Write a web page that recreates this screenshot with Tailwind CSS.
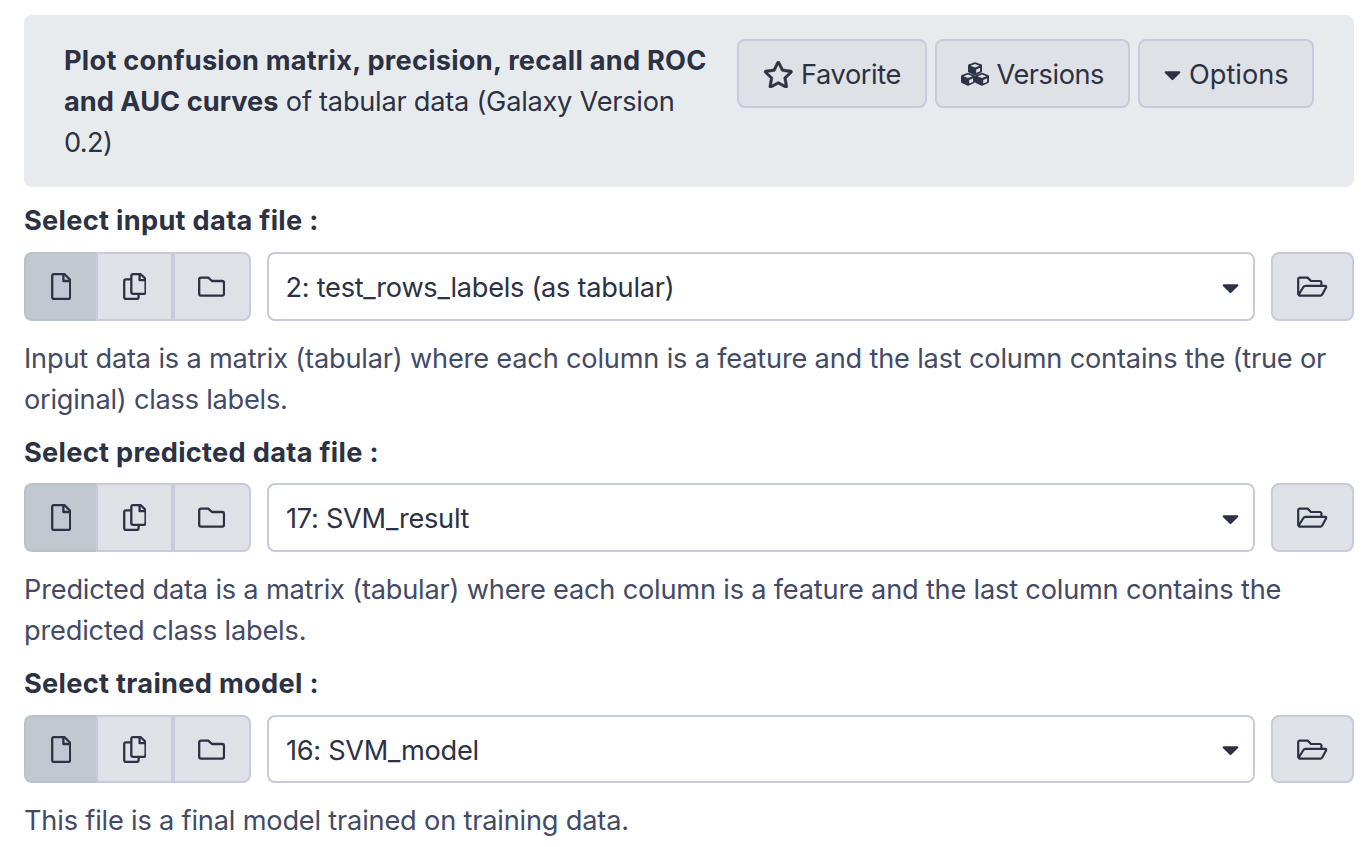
<!DOCTYPE html>
<html lang="en">
<head>
<meta charset="utf-8">
<title>Plot confusion matrix, precision, recall and ROC and AUC curves</title>
<script src="https://cdn.jsdelivr.net/npm/@tailwindcss/browser@4"></script>
</head>
<body class="h-[847px] overflow-hidden bg-white pl-6 pr-[18px] pt-[15px] font-['Inter',sans-serif] text-[27.2px] leading-[41px] text-[#2c3143]">
<svg class="hidden">
  <symbol id="star" viewBox="0 0 576 512" overflow="visible"><path stroke="currentColor" stroke-width="9" d="M528.1 171.5L382 150.2 316.7 17.8c-11.7-23.6-45.6-23.9-57.4 0L194 150.2 47.9 171.5c-26.2 3.8-36.7 36.1-17.7 54.6l105.7 103-25 145.5c-4.5 26.3 23.2 46 46.4 33.7L288 439.6l130.7 68.7c23.2 12.2 50.9-7.4 46.4-33.7l-25-145.5 105.7-103c19-18.5 8.5-50.8-17.7-54.6zM388.6 312.3l23.7 138.4L288 385.4l-124.3 65.3 23.7-138.4-100.6-98 139-20.2 62.2-126 62.2 126 139 20.2-100.6 98z"/></symbol>
  <symbol id="cube" viewBox="0 0 14 13" overflow="visible"><path fill-rule="evenodd" d="M6.2.2Q7-.1 7.8.2L13 2.1Q14 2.5 14 3.5V9Q14 9.9 13.2 10.3L7.8 12.8Q7 13.1 6.2 12.8L.8 10.3Q0 9.9 0 9V3.5Q0 2.5 1 2.1ZM7 1.8L2.5 3.5 7 5.3 11.5 3.5ZM8.2 7.2V10.8L12.1 9.1V5.5Z"/></symbol>
  <symbol id="cubes" viewBox="0 0 28 27.2"><use href="#cube" x="7" y="1.2" width="14" height="13"/><use href="#cube" x="0" y="11.8" width="14" height="13"/><use href="#cube" x="14" y="11.8" width="14" height="13"/></symbol>
  <symbol id="caret" viewBox="0 0 320 512"><path d="M31.3 192h257.3c17.8 0 26.7 21.5 14.1 34.1L174.1 354.8c-7.8 7.8-20.5 7.8-28.3 0L17.2 226.1C4.6 213.5 13.5 192 31.3 192z"/></symbol>
  <symbol id="file" viewBox="0 0 20.4 27.2"><g fill="none" stroke="currentColor" stroke-width="2.3" stroke-linejoin="round"><path d="M3 1.2H13.6L19.2 6.8V24.2A1.8 1.8 0 0 1 17.4 26H3A1.8 1.8 0 0 1 1.2 24.2V3A1.8 1.8 0 0 1 3 1.2Z"/><path d="M12.4 1.6V8H18.8"/></g></symbol>
  <symbol id="copy" viewBox="0 0 23.8 27.2"><g fill="none" stroke="currentColor" stroke-width="2.3" stroke-linejoin="round"><path d="M10.1 1.2H17.8L22.6 6V19A1.8 1.8 0 0 1 20.8 20.8H10.1A1.8 1.8 0 0 1 8.3 19V3A1.8 1.8 0 0 1 10.1 1.2Z"/><path d="M16.6 1.6V7.2H22.2M8.3 6.3H3A1.8 1.8 0 0 0 1.2 8.1V24.2A1.8 1.8 0 0 0 3 26H13.8A1.8 1.8 0 0 0 15.6 24.2V20.8"/></g></symbol>
  <symbol id="folder" viewBox="0 0 27.2 27.2"><path fill="none" stroke="currentColor" stroke-width="2.3" stroke-linejoin="round" d="M3 4.6H10.3L13.9 8H24.2A1.8 1.8 0 0 1 26 9.8V20.8A1.8 1.8 0 0 1 24.2 22.6H3A1.8 1.8 0 0 1 1.2 20.8V6.4A1.8 1.8 0 0 1 3 4.6Z"/></symbol>
  <symbol id="folder-open" viewBox="0 0 30.6 27.2"><path fill="none" stroke="currentColor" stroke-width="2.2" stroke-linejoin="round" d="M1.6 21.8L1.2 21V6.2A1.6 1.6 0 0 1 2.8 4.6H10.6L14 8H22.8A1.6 1.6 0 0 1 24.4 9.6V12.8M8.6 12.9H28.2Q29.8 12.9 29.2 14.2L25.2 21.5Q24.6 22.6 23.4 22.6H2.8Q1.3 22.6 2 21.3L6.4 14Q7.1 12.9 8.6 12.9Z"/></symbol>
</svg>

<header class="flex h-[172px] items-start justify-between rounded-lg bg-[#e8ebee] pl-10 pr-10 pt-6">
  <h1 class="whitespace-nowrap pt-[1px] tracking-[-0.25px]"><b class="tracking-[0.25px]">Plot confusion matrix, precision, recall and ROC</b><br><b class="tracking-[0.02px]">and AUC curves</b> of tabular data (Galaxy Version<br><span class="tracking-[-0.6px]">0.2)</span></h1>
  <div class="flex gap-2">
    <button class="flex h-[69px] w-[190px] items-center whitespace-nowrap rounded-lg border-2 border-[#c8cbdc] bg-[#dee1e5] pl-[24px] pt-[2px]"><svg class="h-[27.2px] w-[30.6px] shrink-0 fill-current"><use href="#star"/></svg><span class="ml-[7.5px] tracking-[-0.4px]">Favorite</span></button>
    <button class="flex h-[69px] w-[195px] items-center whitespace-nowrap rounded-lg border-2 border-[#c8cbdc] bg-[#dee1e5] pl-[24px] pt-[2px]"><svg class="h-[27.2px] w-[28px] shrink-0 fill-current"><use href="#cubes"/></svg><span class="ml-[7.5px] tracking-[-0.45px]">Versions</span></button>
    <button class="flex h-[69px] w-[176px] items-center whitespace-nowrap rounded-lg border-2 border-[#c8cbdc] bg-[#dee1e5] pl-[24px] pt-[2px]"><svg class="h-[27.2px] w-[17px] shrink-0 fill-current"><use href="#caret"/></svg><span class="ml-[8px] tracking-[0px]">Options</span></button>
  </div>
</header>

<main>
  <section class="h-[231px] pt-[13px]">
    <h2 class="font-bold tracking-[0.3px]">Select input data file :</h2>
    <div class="mt-[11px] flex h-[69px]">
      <div class="flex w-[227px]">
        <button class="flex w-[72px] items-center justify-center rounded-l-lg border-2 border-r-0 border-[#b9c1cb] bg-[#c1c8d0]"><svg class="h-[27.2px] w-[20.4px] fill-current"><use href="#file"/></svg></button>
        <button class="flex w-[75px] items-center justify-center border-2 border-r-0 border-[#c8cbdc] bg-[#dee1e5]"><svg class="h-[27.2px] w-[23.8px] fill-current"><use href="#copy"/></svg></button>
        <button class="flex w-[80px] items-center justify-center rounded-r-lg border-2 border-l-4 border-[#c8cbdc] bg-[#dee1e5]"><svg class="h-[27.2px] w-[27.2px] fill-current"><use href="#folder"/></svg></button>
      </div>
      <div class="ml-4 flex w-[988px] items-center justify-between rounded-lg border-2 border-[#c8cbdc] bg-white pl-[16.5px] pr-[14px] pt-[2px]"><span class="tracking-[-0.28px]">2: test_rows_labels (as tabular)</span><svg class="h-[27.2px] w-[17px] fill-current"><use href="#caret"/></svg></div>
      <button class="ml-4 flex w-[83px] items-center justify-center rounded-lg border-2 border-[#c8cbdc] bg-[#dee1e5]"><svg class="h-[27.2px] w-[30.6px] fill-current"><use href="#folder-open"/></svg></button>
    </div>
    <p class="mt-[17px] whitespace-nowrap text-[#434a66]"><span class="tracking-[-0.19px]">Input data is a matrix (tabular) where each column is a feature and the last column contains the (true or</span><br><span class="tracking-[-0.24px]">original) class labels.</span></p>
  </section>

  <section class="h-[231px] pt-[14px]">
    <h2 class="font-bold tracking-[0.3px]">Select predicted data file :</h2>
    <div class="mt-[10px] flex h-[69px]">
      <div class="flex w-[227px]">
        <button class="flex w-[72px] items-center justify-center rounded-l-lg border-2 border-r-0 border-[#b9c1cb] bg-[#c1c8d0]"><svg class="h-[27.2px] w-[20.4px] fill-current"><use href="#file"/></svg></button>
        <button class="flex w-[75px] items-center justify-center border-2 border-r-0 border-[#c8cbdc] bg-[#dee1e5]"><svg class="h-[27.2px] w-[23.8px] fill-current"><use href="#copy"/></svg></button>
        <button class="flex w-[80px] items-center justify-center rounded-r-lg border-2 border-l-4 border-[#c8cbdc] bg-[#dee1e5]"><svg class="h-[27.2px] w-[27.2px] fill-current"><use href="#folder"/></svg></button>
      </div>
      <div class="ml-4 flex w-[988px] items-center justify-between rounded-lg border-2 border-[#c8cbdc] bg-white pl-[17px] pr-[14px] pt-[2px]"><span class="tracking-[-0.27px]">17: SVM_result</span><svg class="h-[27.2px] w-[17px] fill-current"><use href="#caret"/></svg></div>
      <button class="ml-4 flex w-[83px] items-center justify-center rounded-lg border-2 border-[#c8cbdc] bg-[#dee1e5]"><svg class="h-[27.2px] w-[30.6px] fill-current"><use href="#folder-open"/></svg></button>
    </div>
    <p class="mt-[17px] whitespace-nowrap text-[#434a66]"><span class="tracking-[-0.2px]">Predicted data is a matrix (tabular) where each column is a feature and the last column contains the</span><br><span class="tracking-[-0.19px]">predicted class labels.</span></p>
  </section>

  <section class="pt-[14px]">
    <h2 class="font-bold tracking-[0.3px]">Select trained model :</h2>
    <div class="mt-[11px] flex h-[68px]">
      <div class="flex w-[227px]">
        <button class="flex w-[72px] items-center justify-center rounded-l-lg border-2 border-r-0 border-[#b9c1cb] bg-[#c1c8d0] pt-px"><svg class="h-[27.2px] w-[20.4px] fill-current"><use href="#file"/></svg></button>
        <button class="flex w-[75px] items-center justify-center border-2 border-r-0 border-[#c8cbdc] bg-[#dee1e5] pt-px"><svg class="h-[27.2px] w-[23.8px] fill-current"><use href="#copy"/></svg></button>
        <button class="flex w-[80px] items-center justify-center rounded-r-lg border-2 border-l-4 border-[#c8cbdc] bg-[#dee1e5] pt-px"><svg class="h-[27.2px] w-[27.2px] fill-current"><use href="#folder"/></svg></button>
      </div>
      <div class="ml-4 flex w-[988px] items-center justify-between rounded-lg border-2 border-[#c8cbdc] bg-white pl-[17px] pr-[14px] pt-[2px]"><span class="tracking-[-0.3px]">16: SVM_model</span><svg class="h-[27.2px] w-[17px] fill-current"><use href="#caret"/></svg></div>
      <button class="ml-4 flex w-[83px] items-center justify-center rounded-lg border-2 border-[#c8cbdc] bg-[#dee1e5] pt-px"><svg class="h-[27.2px] w-[30.6px] fill-current"><use href="#folder-open"/></svg></button>
    </div>
    <p class="mt-[17px] whitespace-nowrap tracking-[-0.19px] text-[#434a66]">This file is a final model trained on training data.</p>
  </section>
</main>
</body>
</html>
